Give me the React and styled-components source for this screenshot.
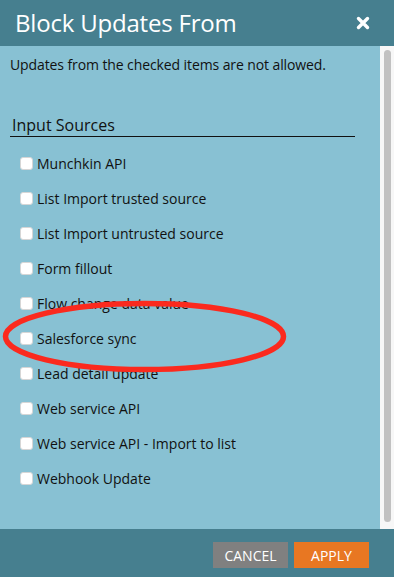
import styled, { createGlobalStyle } from "styled-components";

const GlobalStyle = createGlobalStyle`
  html, body {
    margin: 0;
    padding: 0;
    overflow: hidden;
  }
  body {
    font-family: "Open Sans", "Liberation Sans", sans-serif;
  }
`;

const SOURCES = [
  "Munchkin API",
  "List Import trusted source",
  "List Import untrusted source",
  "Form fillout",
  "Flow change data value",
  "Salesforce sync",
  "Lead detail update",
  "Web service API",
  "Web service API - Import to list",
  "Webhook Update",
];

const Dialog = styled.div`
  position: relative;
  width: 394px;
  height: 577px;
  display: flex;
  flex-direction: column;
  background: #88c1d3;
  overflow: hidden;
`;

const Header = styled.div`
  height: 46px;
  flex-shrink: 0;
  background: #467f8f;
  display: flex;
  align-items: center;
  justify-content: space-between;
  padding: 0 24px 0 15px;
  .title {
    color: #fff;
    font-size: 24px;
    line-height: 28px;
    letter-spacing: -0.2px;
  }
  .close {
    width: 14px;
    height: 14px;
    display: flex;
    cursor: pointer;
  }
`;

const Body = styled.div`
  flex: 1;
  display: flex;
  min-height: 0;
`;

const Content = styled.div`
  flex: 1;
  padding: 10px 25px 0 10px;
  color: #111;
  .intro {
    font-size: 14px;
    line-height: 18px;
    letter-spacing: -0.1px;
  }
`;

const SectionTitle = styled.div`
  margin-top: 40px;
  padding-left: 2px;
  font-size: 16px;
  line-height: 22px;
  border-bottom: 1px solid #111;
`;

const List = styled.div`
  margin-top: 9px;
  padding-left: 10px;
  display: flex;
  flex-direction: column;
`;

const Row = styled.label`
  height: 35px;
  display: flex;
  align-items: center;
  gap: 4px;
  font-size: 14px;
  color: #111;
  cursor: pointer;
  input {
    appearance: none;
    margin: 0;
    width: 11px;
    height: 11px;
    background: #fff;
    border: 1px solid #d6d6d6;
    border-radius: 3px;
    box-sizing: content-box;
  }
`;

const Scrollbar = styled.div`
  width: 14px;
  flex-shrink: 0;
  background: #f7f7f7;
  padding: 4px 0 7px 4px;
  box-sizing: border-box;
  .thumb {
    width: 7px;
    height: 100%;
    background: #c1c1c1;
    border-radius: 4px;
  }
`;

const Footer = styled.div`
  height: 48px;
  flex-shrink: 0;
  background: #467f8f;
  display: flex;
  justify-content: flex-end;
  align-items: flex-start;
  gap: 6px;
  padding: 13px 25px 0 0;
  box-sizing: border-box;
`;

const Button = styled.button`
  width: 75px;
  height: 26px;
  border: none;
  margin: 0;
  padding: 0;
  color: #fff;
  font-family: "Open Sans", "Liberation Sans", sans-serif;
  font-size: 14px;
  text-transform: uppercase;
  background: ${(p) => (p.$primary ? "#e87722" : "#808080")};
  cursor: pointer;
`;

const Annotation = styled.svg`
  position: absolute;
  left: 0;
  top: 297px;
  pointer-events: none;
`;

const App = () => {
  return (
    <>
      <GlobalStyle />
      <Dialog>
        <Header>
          <div className="title">Block Updates From</div>
          <span className="close">
            <svg width="14" height="14" viewBox="0 0 14 14">
              <path
                d="M2.5 2.5 L11.5 11.5 M11.5 2.5 L2.5 11.5"
                stroke="#fff"
                strokeWidth="3.4"
                strokeLinecap="round"
              />
            </svg>
          </span>
        </Header>
        <Body>
          <Content>
            <div className="intro">
              Updates from the checked items are not allowed.
            </div>
            <SectionTitle>Input Sources</SectionTitle>
            <List>
              {SOURCES.map((s) => (
                <Row key={s}>
                  <input type="checkbox" />
                  <span>{s}</span>
                </Row>
              ))}
            </List>
          </Content>
          <Scrollbar>
            <div className="thumb" />
          </Scrollbar>
        </Body>
        <Footer>
          <Button>Cancel</Button>
          <Button $primary>Apply</Button>
        </Footer>
        <Annotation width="292" height="80" viewBox="0 0 292 80">
          <ellipse
            cx="144.5"
            cy="39.5"
            rx="139"
            ry="33"
            fill="none"
            stroke="#fb2a1e"
            strokeWidth="5.5"
          />
        </Annotation>
      </Dialog>
    </>
  );
};

export default App;
